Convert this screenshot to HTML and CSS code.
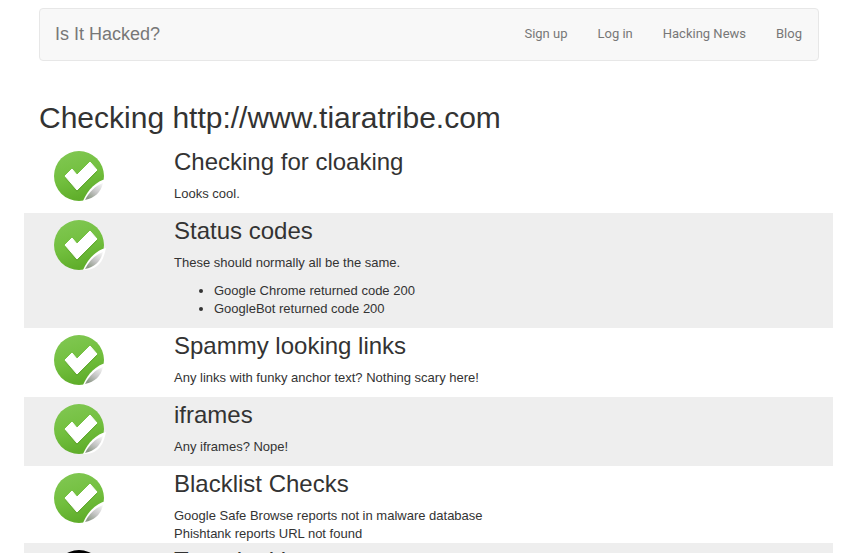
FILE: index.html
```html
<!DOCTYPE html>
<html lang="en">
<head>
    <meta charset="UTF-8">
    <title>Is It Hacked?</title>
    <link rel="stylesheet" href="styles.css">
</head>
<body>
    <svg class="defs" width="0" height="0">
        <defs>
            <linearGradient id="greenFill" x1="0" y1="0" x2="0.3" y2="1">
                <stop offset="0" stop-color="#82c854"/>
                <stop offset="0.6" stop-color="#72bf3e"/>
                <stop offset="1" stop-color="#60ae2b"/>
            </linearGradient>
            <linearGradient id="foldFill" x1="0.9" y1="0" x2="0.2" y2="0.9">
                <stop offset="0" stop-color="#f4f4f4"/>
                <stop offset="0.55" stop-color="#c4c4c4"/>
                <stop offset="1" stop-color="#8e9a88"/>
            </linearGradient>
        </defs>
        <symbol id="ok" viewBox="0 0 52 52">
            <circle cx="25" cy="25" r="25" fill="url(#greenFill)"/>
            <path d="M29 50C35 50 39 49 43 46C47 43 50 38 52 28C43 30 34 38 29 50Z" fill="#fff"/>
            <path d="M31 49C35 41 41 35 49 32C47 41 41 47 31 49Z" fill="url(#foldFill)"/>
            <path d="M11 27L18 20L23 26L36 13L43 21L23 41Z" fill="#5a9c2e" opacity="0.45"/>
            <path d="M11 25L18 18L23 24L36 11L43 19L23 39Z" fill="#fff" stroke="#fff" stroke-linejoin="round"/>
        </symbol>
    </svg>
    <div class="container">
        <nav class="navbar">
            <a class="brand" href="#">Is It Hacked?</a>
            <ul class="nav">
                <li><a href="#">Sign up</a></li>
                <li><a href="#">Log in</a></li>
                <li><a href="#">Hacking News</a></li>
                <li><a href="#">Blog</a></li>
            </ul>
        </nav>
        <h1>Checking http://www.tiaratribe.com</h1>
        <div class="result">
            <div class="result-icon"><svg class="icon"><use href="#ok"/></svg></div>
            <div class="result-body">
                <h3>Checking for cloaking</h3>
                <p>Looks cool.</p>
            </div>
        </div>
        <div class="result shaded">
            <div class="result-icon"><svg class="icon"><use href="#ok"/></svg></div>
            <div class="result-body">
                <h3>Status codes</h3>
                <p>These should normally all be the same.</p>
                <ul>
                    <li>Google Chrome returned code 200</li>
                    <li>GoogleBot returned code 200</li>
                </ul>
            </div>
        </div>
        <div class="result">
            <div class="result-icon"><svg class="icon"><use href="#ok"/></svg></div>
            <div class="result-body">
                <h3>Spammy looking links</h3>
                <p>Any links with funky anchor text? Nothing scary here!</p>
            </div>
        </div>
        <div class="result shaded">
            <div class="result-icon"><svg class="icon"><use href="#ok"/></svg></div>
            <div class="result-body">
                <h3>iframes</h3>
                <p>Any iframes? Nope!</p>
            </div>
        </div>
        <div class="result">
            <div class="result-icon"><svg class="icon"><use href="#ok"/></svg></div>
            <div class="result-body">
                <h3>Blacklist Checks</h3>
                <p class="tight">Google Safe Browse reports not in malware database<br>Phishtank reports URL not found</p>
            </div>
        </div>
        <div class="result shaded">
            <div class="result-icon"><div class="black-icon"></div></div>
            <div class="result-body">
                <h3>Text cloaking</h3>
            </div>
        </div>
    </div>
</body>
</html>
```

FILE: styles.css
```css
html, body {
    height: 553px;
    overflow: hidden;
}
body {
    margin: 0;
    font-family: "Liberation Sans", Arial, sans-serif;
    font-size: 13px;
    line-height: 18px;
    color: #333;
    background-color: #fff;
}
.defs {
    position: absolute;
}
.container {
    padding: 8px 26px 0 39px;
}
.navbar {
    display: flex;
    justify-content: space-between;
    align-items: center;
    height: 50px;
    margin-bottom: 39px;
    padding: 0 16px 1px 15px;
    background-color: #f8f8f8;
    border: 1px solid #e7e7e7;
    border-radius: 4px;
}
.navbar a {
    color: #777;
    text-decoration: none;
}
.brand {
    font-size: 18px;
}
.nav {
    display: flex;
    gap: 30px;
    margin: 0;
    padding: 0;
    list-style: none;
    font-family: Roboto, "Liberation Sans", sans-serif;
    font-size: 13px;
}
h1 {
    margin: 0 0 8px;
    font-size: 30px;
    font-weight: 500;
    line-height: 36px;
}
.result {
    display: flex;
    margin: 0 -14px 0 -15px;
    padding-left: 30px;
}
.shaded {
    background-color: #eee;
}
.result-icon {
    width: 120px;
    flex-shrink: 0;
    padding-top: 7px;
}
.icon {
    display: block;
    width: 52px;
    height: 52px;
}
.black-icon {
    width: 50px;
    height: 50px;
    border-radius: 50%;
    background-color: #000;
}
h3 {
    margin: 5px 0 10px;
    font-size: 24px;
    font-weight: 500;
    line-height: 26px;
}
p {
    margin: 0 0 10px;
}
.tight {
    margin-bottom: 0;
}
ul {
    margin: 0 0 10px;
    padding-left: 40px;
}
```
